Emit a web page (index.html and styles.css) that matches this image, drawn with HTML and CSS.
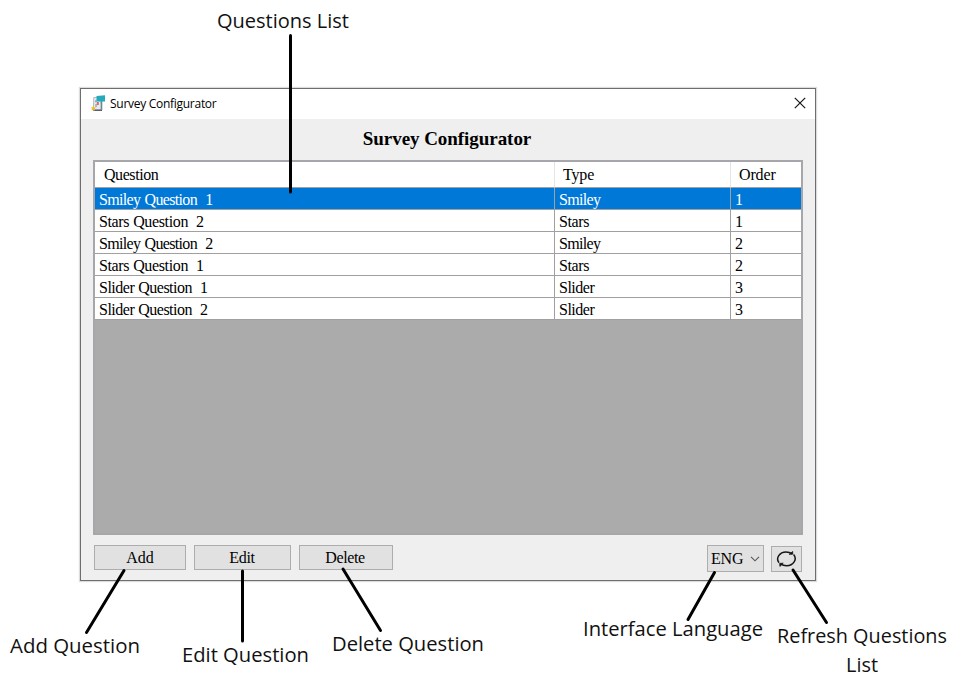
FILE: index.html
```html
<!DOCTYPE html>
<html lang="en">
<head>
<meta charset="utf-8">
<title>Survey Configurator</title>
<link rel="stylesheet" href="styles.css">
</head>
<body>
<main class="window">
  <header class="titlebar">
    <svg class="app-icon" width="16" height="17" viewBox="0 0 16 17">
      <path d="M2.800 2.500h7.400v12.500H2.300z" fill="#e6eaee" stroke="#a3abb2" stroke-width=".8"/>
      <path d="M2 14.400h9v1.600H2.600z" fill="#56636e"/>
      <path d="M9.800 7h1.500v8h-1.500z" fill="#78838c"/>
      <path d="M4 5.200h1.800v2H4zM4.300 9h1.500v3H4.300z" fill="#a0a9b1"/>
      <path d="M5.800 7h2v3h-2z" fill="#d46a70"/>
      <path d="M5.500 1 14 .3v6.200h-2.300l-2 2V6.500H5.500z" fill="#25a9bd"/>
      <path d="m2.300 10.800 1 1.500 1.500.3-1.100 1.300.3 1.700-1.700-.7-1.700.6.300-1.700L0 12.600l1.500-.4z" fill="#eebb35"/>
    </svg>
    <span class="caption">Survey Configurator</span>
    <svg class="close" width="12" height="12" viewBox="0 0 12 12"><path d="m.8.8 10.400 10.400M11.200.8.8 11.200" stroke="#111" stroke-width="1.150"/></svg>
  </header>
  <h1 class="heading"><span>Survey Configurator</span></h1>
  <section class="grid">
    <div class="row head"><span>Question</span><span>Type</span><span>Order</span></div>
    <div class="row selected"><span class="tight">Smiley Question  1</span><span class="tight">Smiley</span><span>1</span></div>
    <div class="row"><span class="loose">Stars Question  2</span><span class="loose">Stars</span><span>1</span></div>
    <div class="row"><span class="tight">Smiley Question  2</span><span class="tight">Smiley</span><span>2</span></div>
    <div class="row"><span class="loose">Stars Question  1</span><span class="loose">Stars</span><span>2</span></div>
    <div class="row"><span>Slider Question  1</span><span>Slider</span><span>3</span></div>
    <div class="row"><span>Slider Question  2</span><span>Slider</span><span>3</span></div>
  </section>
  <footer class="actions">
    <button class="btn add">Add</button>
    <button class="btn edit">Edit</button>
    <button class="btn delete">Delete</button>
    <button class="btn language">ENG<svg width="10" height="6" viewBox="0 0 10 6"><path d="m1 .8 4 4 4-4" fill="none" stroke="#555" stroke-width="1.100"/></svg></button>
    <button class="btn refresh" aria-label="Refresh">
      <svg width="21" height="18" viewBox="0 0 21 18" fill="none" stroke="#161616" stroke-width="1.500">
        <path d="M3 12.800C-.6 8.200 3.600 2 10 2c2.300 0 4.300.5 6 1.700"/>
        <path d="M17.600 4.500c4 4.700-.2 11.200-7 11.200-2.300 0-4.300-.6-6-1.900"/>
        <path d="M13.200 4.300 16.700 4.200V1.500zM7.200 13.200l-3.500.2.200 3z" fill="#161616" stroke-width=".8"/>
      </svg>
    </button>
  </footer>
</main>
<svg class="notes" width="959" height="691" viewBox="0 0 959 691">
  <g class="leaders">
    <path d="M290.500 35.500V192"/>
    <path d="M124 570.500 86.500 632.500"/>
    <path d="M242.500 571V641"/>
    <path d="M343 569 380.500 630.500"/>
    <path d="M714.500 572.500 688 619.500"/>
    <path d="M793 570 826.500 622.500"/>
  </g>
  <g class="labels">
    <text x="217" y="28" textLength="132" lengthAdjust="spacingAndGlyphs">Questions List</text>
    <text x="10" y="653" textLength="130" lengthAdjust="spacingAndGlyphs">Add Question</text>
    <text x="182" y="662" textLength="127" lengthAdjust="spacingAndGlyphs">Edit Question</text>
    <text x="332" y="651" textLength="152" lengthAdjust="spacingAndGlyphs">Delete Question</text>
    <text x="583" y="636" textLength="180" lengthAdjust="spacingAndGlyphs">Interface Language</text>
    <text x="777" y="643" textLength="170" lengthAdjust="spacingAndGlyphs">Refresh Questions</text>
    <text x="846" y="672" textLength="32" lengthAdjust="spacingAndGlyphs">List</text>
  </g>
</svg>
</body>
</html>
```
FILE: styles.css
```css
* { box-sizing: border-box; }
body {
  margin: 0;
  width: 959px;
  height: 691px;
  overflow: hidden;
  background: #fff;
  padding: 88px 0 0 80px;
}
.window {
  width: 736px;
  height: 493px;
  border: 1px solid #6e6e70;
  background: #efefef;
  box-shadow: 0 0 1px 1px #ddd;
  font: 16px "Liberation Serif", serif;
  color: #000;
}
.titlebar {
  height: 30px;
  background: #fff;
  display: flex;
  align-items: center;
  padding: 0 9px 0 10px;
}
.app-icon { margin-top: -2px; }
.caption {
  font: 12px "Open Sans", sans-serif;
  letter-spacing: -0.28px;
  margin: -1px 0 0 3px;
}
.close { margin-left: auto; margin-top: -2px; }
.heading {
  margin: 0;
  height: 41px;
  font-size: 19px;
  letter-spacing: -0.05px;
  line-height: 40px;
  text-align: center;
  padding-right: 2px;
}
.grid {
  width: 710px;
  height: 375px;
  margin-left: 12px;
  border: 2px solid #a7a7ab;
  background: #ababab;
}
.row {
  display: grid;
  grid-template-columns: 460px 176px 70px;
  height: 22px;
  background: #fff;
  white-space: pre;
}
.row span {
  height: 22px;
  line-height: 23px;
  padding: 0 0 0 4px;
  letter-spacing: -0.5px;
  word-spacing: 0.5px;
  border-right: 1px solid #a0a0a0;
  border-bottom: 1px solid #a0a0a0;
}
.row .tight { letter-spacing: -0.66px; word-spacing: 0.8px; }
.row .loose { letter-spacing: -0.36px; word-spacing: 0.3px; }
.row span:last-child { border-right: 0; }
.row.head { height: 26px; }
.row.head span {
  height: 26px;
  line-height: 26px;
  padding: 0 0 0 9px;
  letter-spacing: -0.43px;
  border-right-color: #e5e5e5;
}
.row.head span:nth-child(2), .row.head span:nth-child(3) { padding-left: 8px; letter-spacing: -0.15px; }
.row.selected { background: #0078d7; color: #fff; }
.actions {
  display: flex;
  align-items: flex-start;
  padding: 10px 13px 0;
}
.btn {
  font: 16px "Liberation Serif", serif;
  color: #000;
  background: #e1e1e1;
  border: 1px solid #adadad;
  border-radius: 0;
  padding: 1px 0 0;
  height: 25px;
}
.add { width: 92px; }
.edit { width: 97px; margin-left: 8px; letter-spacing: -0.35px; padding-right: 1px; }
.delete { width: 94px; margin-left: 8px; letter-spacing: -0.4px; padding-right: 2px; }
.language {
  width: 57px;
  height: 27px;
  margin-left: auto;
  display: flex;
  align-items: center;
  justify-content: space-between;
  padding: 0 3px;
  letter-spacing: -0.2px;
}
.refresh {
  width: 31px;
  height: 26px;
  margin: 1px 0 0 7px;
  padding: 0;
  display: flex;
  align-items: center;
  justify-content: center;
}
.notes { position: absolute; left: 0; top: 0; pointer-events: none; }
.leaders { fill: none; stroke: #000; stroke-width: 3; stroke-linecap: round; }
.labels { font: 20.5px "Open Sans", sans-serif; fill: #111; }
```
